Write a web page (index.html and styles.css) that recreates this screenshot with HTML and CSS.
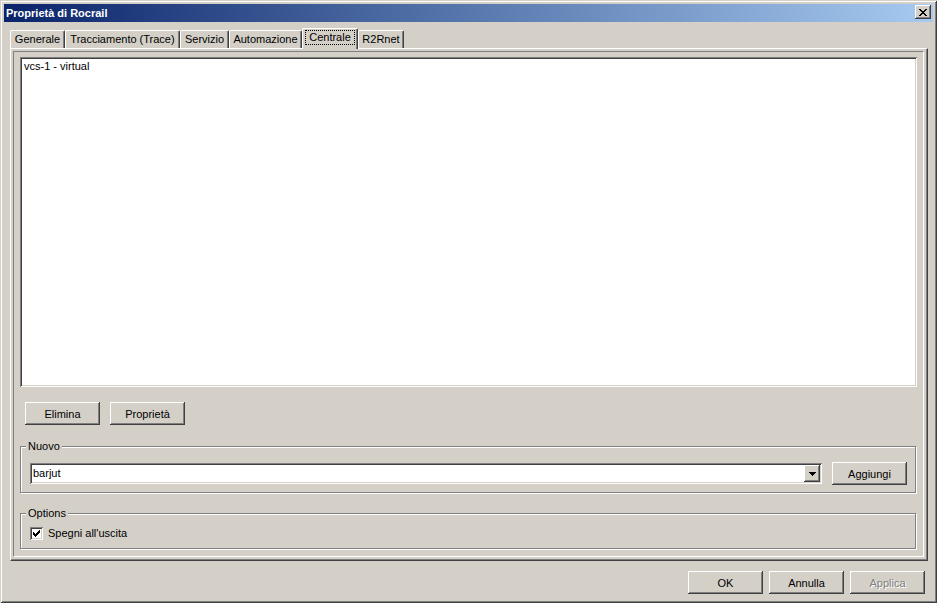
FILE: index.html
```html
<!DOCTYPE html>
<html lang="it">
<head>
<meta charset="utf-8">
<title>Proprietà di Rocrail</title>
<link rel="stylesheet" href="styles.css">
</head>
<body>
<div class="window">
  <div class="titlebar">
    <span class="title">Proprietà di Rocrail</span>
    <button class="close" aria-label="Chiudi">
      <svg width="8" height="7" viewBox="0 0 8 7" shape-rendering="crispEdges"><path fill="#000" d="M0 0h2v1H0z M6 0h2v1H6z M1 1h2v1H1z M5 1h2v1H5z M2 2h4v1H2z M3 3h2v1H3z M2 4h4v1H2z M1 5h2v1H1z M5 5h2v1H5z M0 6h2v1H0z M6 6h2v1H6z"/></svg>
    </button>
  </div>

  <div class="tabs">
    <div class="tab t-generale">Generale</div>
    <div class="tab t-trace">Tracciamento (Trace)</div>
    <div class="tab t-servizio">Servizio</div>
    <div class="tab t-auto">Automazione</div>
    <div class="tab t-centrale active"><span class="focus">Centrale</span></div>
    <div class="tab t-r2r">R2Rnet</div>
  </div>

  <div class="tabpanel">
    <div class="page">
      <div class="listbox">
        <div class="item">vcs-1 - virtual</div>
      </div>

      <div class="btnrow">
        <button class="btn">Elimina</button>
        <button class="btn">Proprietà</button>
      </div>

      <fieldset class="group">
        <legend>Nuovo</legend>
        <div class="newrow">
          <div class="combo">
            <span class="combotext">barjut</span>
            <span class="arrowbtn">
              <svg width="7" height="4" viewBox="0 0 7 4" shape-rendering="crispEdges"><path fill="#000" d="M0 0h7v1H0z M1 1h5v1H1z M2 2h3v1H2z M3 3h1v1H3z"/></svg>
            </span>
          </div>
          <button class="btn">Aggiungi</button>
        </div>
      </fieldset>

      <fieldset class="group options">
        <legend>Options</legend>
        <label class="checkrow">
          <span class="checkbox">
            <svg width="7" height="7" viewBox="0 0 7 7" shape-rendering="crispEdges"><path fill="#000" d="M6 0h1v1H6z M5 1h2v1H5z M0 2h1v1H0z M4 2h3v1H4z M0 3h2v1H0z M3 3h3v1H3z M0 4h5v1H0z M1 5h3v1H1z M2 6h1v1H2z"/></svg>
          </span>
          <span>Spegni all'uscita</span>
        </label>
      </fieldset>
    </div>
  </div>

  <div class="footer">
    <button class="btn">OK</button>
    <button class="btn">Annulla</button>
    <button class="btn disabled">Applica</button>
  </div>
</div>
</body>
</html>
```

FILE: styles.css
```css
* { box-sizing: border-box; }
html, body { margin: 0; padding: 0; }
body {
  width: 937px;
  height: 603px;
  overflow: hidden;
  background: #d4d0c8;
  font-family: "Liberation Sans", Arial, sans-serif;
  font-size: 11px;
  color: #000;
}

.window {
  width: 937px;
  height: 603px;
  padding: 4px;
  display: flex;
  flex-direction: column;
  background: #d4d0c8;
  box-shadow: inset 1px 1px 0 #d4d0c8, inset -1px -1px 0 #404040,
              inset 2px 2px 0 #ffffff, inset -2px -2px 0 #808080;
}

/* title bar */
.titlebar {
  height: 18px;
  display: flex;
  align-items: flex-start;
  padding: 0 2px;
  background: linear-gradient(to right, #0a246a, #a6caf0);
}
.title {
  color: #fff;
  font-weight: bold;
  line-height: 18px;
}
.close {
  margin: 1px 0 0 auto;
  width: 16px;
  height: 14px;
  padding: 0;
  border: none;
  background: #d4d0c8;
  display: flex;
  align-items: center;
  justify-content: center;
  box-shadow: inset -1px -1px 0 #404040, inset 1px 1px 0 #ffffff, inset -2px -2px 0 #808080;
}
.close svg { display: block; }

/* tabs */
.tabs {
  display: flex;
  align-items: flex-end;
  margin: 6px 0 0 6px;
  height: 20px;
}
.tab {
  height: 18px;
  padding-top: 2px;
  line-height: 13px;
  text-align: center;
  white-space: nowrap;
  background: #d4d0c8;
  border-top: 1px solid #fff;
  border-left: 1px solid #fff;
  border-right: 1px solid #404040;
  border-radius: 2px 2px 0 0;
  box-shadow: inset -1px 0 0 #808080;
}
.t-generale { width: 55px; }
.t-trace { width: 115px; }
.t-servizio { width: 49px; }
.t-auto { width: 73px; }
.t-centrale { width: 56px; }
.t-r2r { width: 46px; }
.tab.active {
  height: 21px;
  margin-bottom: -1px;
  padding-top: 1px;
  position: relative;
  z-index: 1;
}
.focus {
  display: block;
  margin: 0 2px 0 2px;
  border: 1px dotted #000;
  line-height: 12px;
  padding: 0 0 1px;
}

/* tab panel */
.tabpanel {
  margin-left: 6px;
  width: 918px;
  height: 513px;
  padding: 2px 3px 3px 2px;
  display: flex;
  flex-direction: column;
  border-top: 1px solid #fff;
  border-left: 1px solid #fff;
  border-right: 1px solid #404040;
  border-bottom: 1px solid #404040;
  box-shadow: inset -1px -1px 0 #808080;
}
.page {
  flex: 1;
  display: flex;
  flex-direction: column;
  padding: 5px 6px;
  border-top: 1px solid #808080;
  border-left: 1px solid #808080;
  border-right: 1px solid #fff;
  border-bottom: 1px solid #fff;
}

.listbox {
  height: 330px;
  background: #fff;
  padding: 3px 4px;
  box-shadow: inset 1px 1px 0 #808080, inset -1px -1px 0 #ffffff,
              inset 2px 2px 0 #404040, inset -2px -2px 0 #d4d0c8;
}
.item { line-height: 13px; }

/* buttons */
.btn {
  width: 75px;
  height: 23px;
  padding: 0;
  border: none;
  background: #d4d0c8;
  font: inherit;
  color: #000;
  text-align: center;
  box-shadow: inset -1px -1px 0 #404040, inset 1px 1px 0 #ffffff, inset -2px -2px 0 #808080;
}
.btn.disabled {
  color: #808080;
  text-shadow: 1px 1px 0 #fff;
}
.btnrow {
  display: flex;
  gap: 10px;
  margin-top: 15px;
  padding-left: 5px;
}

/* group boxes */
.group {
  margin: 15px 1px 0 0;
  padding: 9px 8px 7px 9px;
  min-width: 0;
  border: 1px solid #808080;
  box-shadow: 1px 1px 0 #fff, inset 1px 1px 0 #fff;
}
.group legend {
  margin-left: -4px;
  padding: 0 2px;
  line-height: 13px;
  background: #d4d0c8;
}
.group.options {
  margin-top: 14px;
  padding: 6px 8px 7px 9px;
}

.newrow {
  display: flex;
  align-items: center;
  gap: 10px;
}
.combo {
  flex: 1;
  height: 21px;
  display: flex;
  padding: 2px;
  background: #fff;
  box-shadow: inset 1px 1px 0 #808080, inset -1px -1px 0 #ffffff,
              inset 2px 2px 0 #404040, inset -2px -2px 0 #d4d0c8;
}
.combotext {
  flex: 1;
  padding-left: 1px;
  line-height: 17px;
}
.arrowbtn {
  width: 16px;
  height: 17px;
  display: flex;
  align-items: center;
  justify-content: center;
  background: #d4d0c8;
  box-shadow: inset -1px -1px 0 #404040, inset 1px 1px 0 #ffffff, inset -2px -2px 0 #808080;
}
.arrowbtn svg { display: block; }

.checkrow {
  display: flex;
  align-items: center;
  gap: 5px;
  height: 15px;
  line-height: 15px;
}
.checkbox {
  width: 13px;
  height: 13px;
  padding: 3px;
  background: #fff;
  box-shadow: inset 1px 1px 0 #808080, inset -1px -1px 0 #ffffff,
              inset 2px 2px 0 #404040, inset -2px -2px 0 #d4d0c8;
}
.checkbox svg { display: block; }

/* footer */
.footer {
  display: flex;
  justify-content: flex-end;
  gap: 6px;
  margin-top: 10px;
  padding-right: 8px;
}
```
